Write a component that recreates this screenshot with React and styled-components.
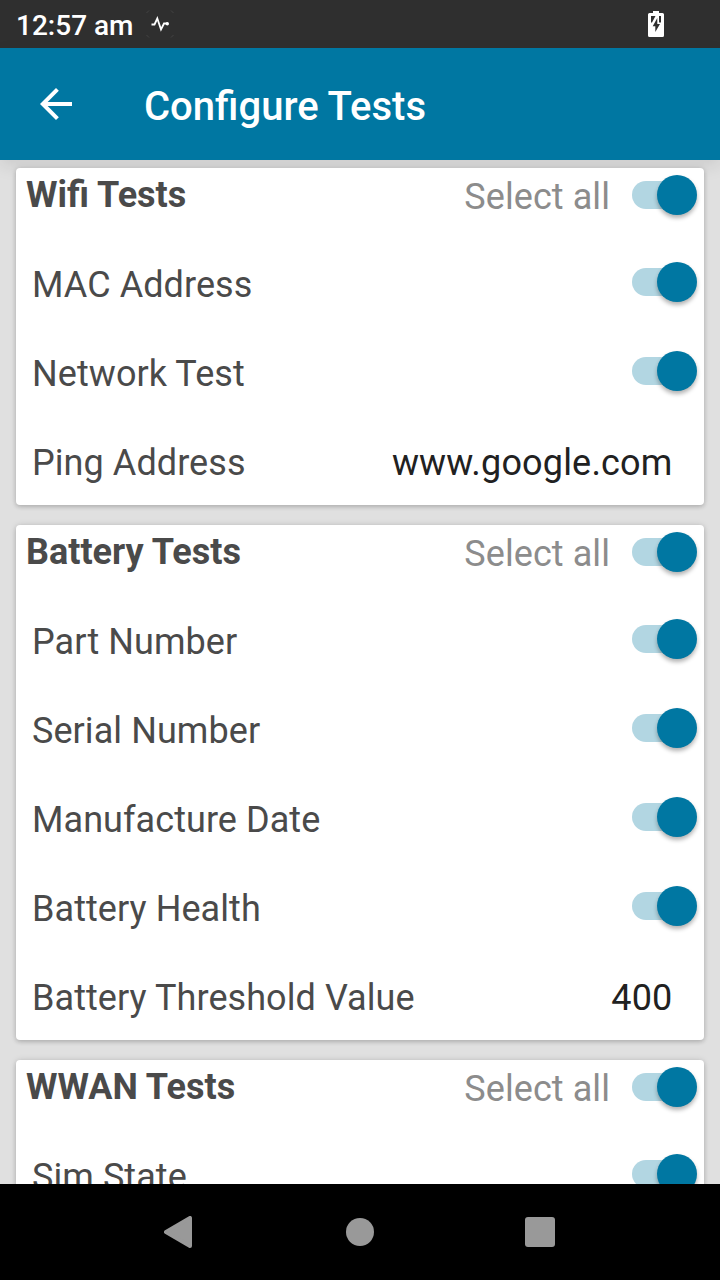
import React, { useState } from "react";
import styled, { createGlobalStyle } from "styled-components";

const GlobalStyle = createGlobalStyle`
  * { box-sizing: border-box; }
  body { margin: 0; background: #e0e0e0; font-family: Roboto, sans-serif; }
`;

const Screen = styled.div`
  width: 720px;
  height: 1280px;
  display: flex;
  flex-direction: column;
  overflow: hidden;
  background: #e0e0e0;
`;

const StatusBar = styled.div`
  flex: none;
  height: 48px;
  padding: 2px 56px 0 16px;
  display: flex;
  align-items: center;
  justify-content: space-between;
  background: #2f2f2f;
  color: #fff;
`;

const StatusGroup = styled.div`
  display: flex;
  align-items: center;
  gap: 13px;
`;

const Clock = styled.span`
  margin-top: 1px;
  font-size: 28px;
  font-weight: 500;
  line-height: 34px;
  white-space: nowrap;
`;

const Icon = styled.svg`
  display: block;
  flex: none;
  margin-top: ${(p) => p.$top || 0}px;
`;

const AppBar = styled.header`
  flex: none;
  height: 112px;
  padding-left: 40px;
  display: flex;
  align-items: center;
  gap: 72px;
  background: #0077a2;
  color: #fff;
  box-shadow: 0 6px 16px rgba(0, 0, 0, 0.09);
`;

const IconButton = styled.button`
  padding: 0;
  border: 0;
  background: none;
  color: inherit;
`;

const Title = styled.h1`
  margin: 5px 0 0;
  font-size: 40px;
  font-weight: 500;
  line-height: 48px;
  white-space: nowrap;
`;

const Content = styled.main`
  flex: 1;
  min-height: 0;
  padding: 8px 16px 0;
  display: flex;
  flex-direction: column;
  gap: 20px;
  overflow: hidden;
`;

const Card = styled.section`
  flex: none;
  border-radius: 4px;
  background: #fff;
  box-shadow: 0 2px 4px rgba(0, 0, 0, 0.16), 0 0 6px rgba(0, 0, 0, 0.12);
`;

const CardHeader = styled.div`
  height: 70px;
  padding: 0 7px 16px 10px;
  display: flex;
  align-items: center;
`;

const CardTitle = styled.h2`
  flex: 1;
  margin: 0;
  color: #4a4a4a;
  font-size: 36px;
  font-weight: 700;
  line-height: 42px;
`;

const SelectAll = styled.span`
  margin: 4px 22px 0 0;
  color: #8c8c8c;
  font-size: 36px;
  line-height: 42px;
  letter-spacing: 0.07px;
`;

const Row = styled.div`
  height: 89px;
  padding: 0 7px 1px 16px;
  display: flex;
  align-items: center;
  justify-content: space-between;
`;

const Label = styled.span`
  margin-top: 5px;
  color: #4a4a4a;
  font-size: 36px;
  line-height: 42px;
  letter-spacing: 0.07px;
`;

const Value = styled(Label)`
  margin-right: 24.5px;
  color: #212121;
  letter-spacing: 0.17px;
`;

const SwitchButton = styled.button`
  flex: none;
  width: 65px;
  height: 40px;
  padding: 0;
  border: 0;
  background: none;
  display: grid;
  align-items: center;
`;

const Rail = styled.span`
  grid-area: 1 / 1;
  width: 56px;
  height: 28px;
  border-radius: 14px;
  background: #b2d6e2;
`;

const Thumb = styled.span`
  grid-area: 1 / 1;
  justify-self: ${(p) => (p.$on ? "end" : "start")};
  width: 40px;
  height: 40px;
  border-radius: 50%;
  background: #0077a2;
  box-shadow: 0 3px 4px rgba(0, 0, 0, 0.3);
`;

const NavBar = styled.nav`
  flex: none;
  height: 96px;
  padding: 0 90px;
  display: flex;
  align-items: center;
  background: #000;
`;

const NavItem = styled.div`
  flex: 1;
  display: flex;
  justify-content: center;
`;

const sections = [
  {
    title: "Wifi Tests",
    rows: [{ label: "MAC Address" }, { label: "Network Test" }, { label: "Ping Address", value: "www.google.com" }],
  },
  {
    title: "Battery Tests",
    rows: [
      { label: "Part Number" },
      { label: "Serial Number" },
      { label: "Manufacture Date" },
      { label: "Battery Health" },
      { label: "Battery Threshold Value", value: "400" },
    ],
  },
  { title: "WWAN Tests", rows: [{ label: "Sim State" }] },
];

function Switch() {
  const [on, setOn] = useState(true);
  return (
    <SwitchButton role="switch" aria-checked={on} onClick={() => setOn(!on)}>
      <Rail />
      <Thumb $on={on} />
    </SwitchButton>
  );
}

function PulseIcon() {
  return (
    <Icon $top={-2} width="28" height="28" viewBox="0 0 28 28" fill="none">
      <path d="M0.5 3L3 .5M25 .5L27.5 3M.5 25L3 27.5M25 27.5L27.5 25" stroke="#444" />
      <path d="M5.5 14.5H8.5L11.3 8.5L15 19.5L18 13.5H21.5" stroke="#fff" strokeWidth="1.8" />
      <circle cx="21.3" cy="13.7" r="1.7" fill="#fff" />
    </Icon>
  );
}

function BatteryIcon() {
  return (
    <Icon $top={-2} width="16" height="26" viewBox="0 0 16 26">
      <path d="M5 0H11V2H14.5Q16 2 16 3.5V24.5Q16 26 14.5 26H1.5Q0 26 0 24.5V3.5Q0 2 1.5 2H5Z" fill="#fff" />
      <path d="M3 5H7.5L4 11.5H3ZM11 5H13V11.5H11Z" fill="#2f2f2f" />
      <path d="M9.3 7V13H12L7.3 21V15.3H4.7Z" fill="#2f2f2f" />
    </Icon>
  );
}

export default function App() {
  return (
    <Screen>
      <GlobalStyle />
      <StatusBar>
        <StatusGroup>
          <Clock>12:57 am</Clock>
          <PulseIcon />
        </StatusGroup>
        <BatteryIcon />
      </StatusBar>
      <AppBar>
        <IconButton aria-label="Back">
          <Icon width="32" height="32" viewBox="4 4 16 16" fill="currentColor">
            <path d="M20 11H7.83l5.59-5.59L12 4l-8 8 8 8 1.41-1.41L7.83 13H20v-2z" />
          </Icon>
        </IconButton>
        <Title>Configure Tests</Title>
      </AppBar>
      <Content>
        {sections.map((section) => (
          <Card key={section.title}>
            <CardHeader>
              <CardTitle>{section.title}</CardTitle>
              <SelectAll>Select all</SelectAll>
              <Switch />
            </CardHeader>
            {section.rows.map((row) => (
              <Row key={row.label}>
                <Label>{row.label}</Label>
                {row.value ? <Value>{row.value}</Value> : <Switch />}
              </Row>
            ))}
          </Card>
        ))}
      </Content>
      <NavBar>
        <NavItem>
          <Icon width="32" height="32" viewBox="0 0 32 32">
            <path d="M2 16L26 2V30Z" fill="#999" stroke="#999" strokeWidth="4" strokeLinejoin="round" />
          </Icon>
        </NavItem>
        <NavItem>
          <Icon width="28" height="28" viewBox="0 0 28 28">
            <circle cx="14" cy="14" r="14" fill="#999" />
          </Icon>
        </NavItem>
        <NavItem>
          <Icon width="30" height="30" viewBox="0 0 30 30">
            <rect width="30" height="30" rx="3" fill="#999" />
          </Icon>
        </NavItem>
      </NavBar>
    </Screen>
  );
}
